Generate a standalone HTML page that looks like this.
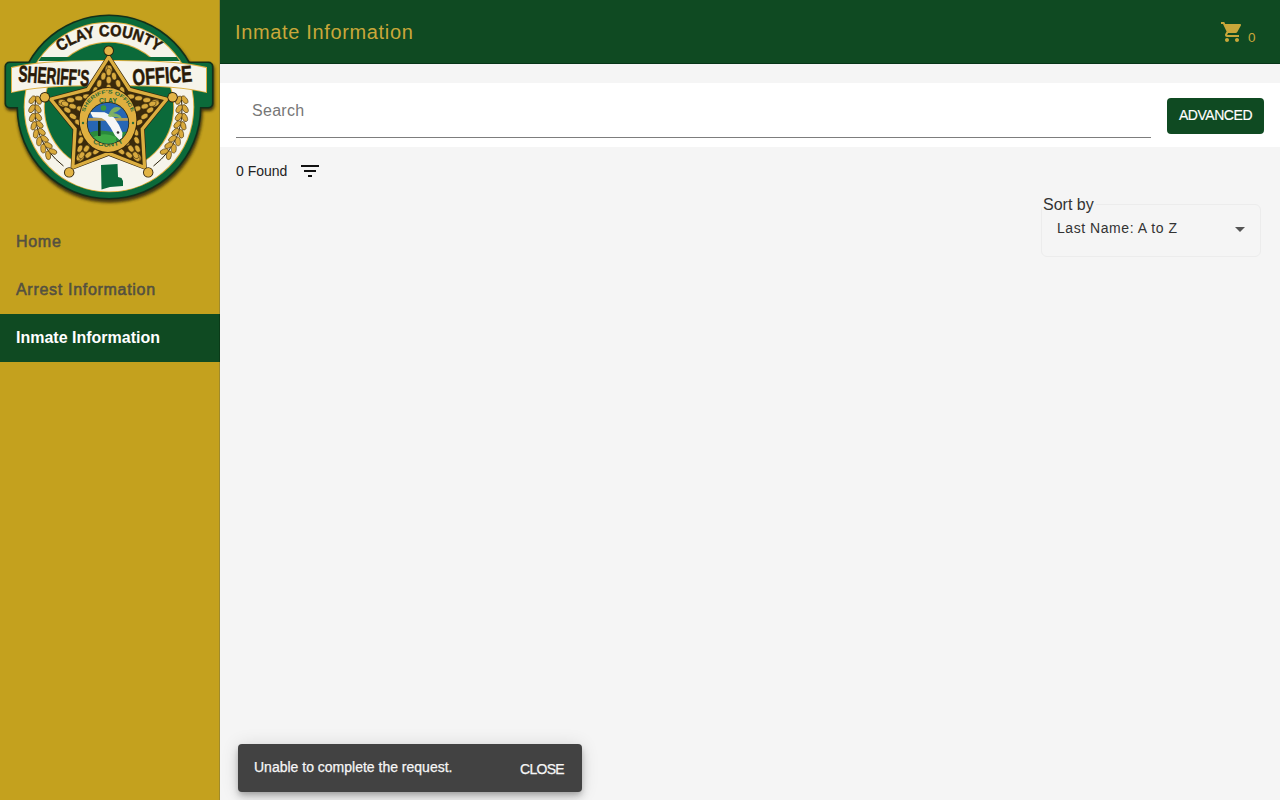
<!DOCTYPE html>
<html><head><meta charset="utf-8">
<style>
*{box-sizing:border-box;margin:0;padding:0}
html,body{width:1280px;height:800px;overflow:hidden;background:#f5f5f5;font-family:"Liberation Sans",sans-serif}
#side{position:absolute;left:0;top:0;width:220px;height:800px;background:#c4a11e;border-right:1px solid #a08a2a}
#logo{position:absolute;left:0;top:0;width:219px;height:210px}
.nav{position:absolute;left:0;width:219px;height:48px;font-size:16px;font-weight:400;letter-spacing:0.7px;-webkit-text-stroke:0.55px #545040;color:#545040;padding-left:16px;line-height:48px;white-space:nowrap}
.nav.sel{font-weight:700;letter-spacing:0;-webkit-text-stroke:0}
.nav.sel{background:#0f4a22;color:#fff;width:220px;border-right:1px solid #0a3a18}
#hdr{position:absolute;left:220px;top:0;width:1060px;height:64px;background:#0f4a22;border-bottom:1px solid #063518}
#title{position:absolute;left:15px;top:0;line-height:64px;font-size:20px;letter-spacing:0.65px;color:#c9a73a;white-space:nowrap}
#cart{position:absolute;left:1000px;top:20px;width:24px;height:24px}
#cnt{position:absolute;left:1028px;top:31px;font-size:13.5px;color:#c9a73a;line-height:14px}
#sbar{position:absolute;left:220px;top:83px;width:1060px;height:64px;background:#fff}
#sline{position:absolute;left:16px;top:54px;width:915px;height:1px;background:#7d7d7d}
#sph{position:absolute;left:32px;top:18px;font-size:16px;letter-spacing:0.3px;color:#777;line-height:20px}
#adv{position:absolute;left:947px;top:15px;width:97px;height:36px;background:#0f4a22;border-radius:4px;color:#fff;font-size:14px;letter-spacing:-0.45px;-webkit-text-stroke:0.15px #fff;text-align:center;line-height:35px}
#found{position:absolute;left:236px;top:162px;font-size:14px;color:#222;line-height:18px}
#filt{position:absolute;left:298px;top:159px;width:24px;height:24px}
#sortlbl{position:absolute;left:1042px;top:196px;font-size:16px;color:#333;line-height:18px;background:#f5f5f5;padding:0 2px 0 1px;z-index:2}
#sel{position:absolute;left:1041px;top:204px;width:220px;height:53px;border:1px solid #ececec;border-radius:6px}
#selv{position:absolute;left:1057px;top:220px;font-size:14px;letter-spacing:0.55px;color:#333;line-height:16px}
#arr{position:absolute;left:1235px;top:227px;width:0;height:0;border-left:5px solid transparent;border-right:5px solid transparent;border-top:5px solid #555}
#snack{position:absolute;left:238px;top:744px;width:344px;height:48px;background:#424242;border-radius:4px;box-shadow:0 3px 5px -1px rgba(0,0,0,.2),0 6px 10px 0 rgba(0,0,0,.14),0 1px 18px 0 rgba(0,0,0,.12)}
#smsg{position:absolute;left:16px;top:15px;font-size:14px;color:#f6f6f6;line-height:16px;white-space:nowrap;-webkit-text-stroke:0.25px #f6f6f6}
#sclose{position:absolute;left:282px;top:17px;font-size:14px;letter-spacing:-0.7px;color:#f6f6f6;line-height:16px;-webkit-text-stroke:0.25px #f6f6f6}
</style></head><body>
<div id="side">
<svg id="logo" viewBox="0 0 219 210" width="219" height="210">
<defs>
<filter id="sh" x="-10%" y="-10%" width="120%" height="130%"><feGaussianBlur stdDeviation="1.8"/></filter>
<clipPath id="inner"><circle cx="109.0" cy="107.0" r="84.3"/></clipPath>
</defs>
<g filter="url(#sh)" opacity="0.85"><circle cx="109.8" cy="109.8" r="93.0" fill="#2a2408"/><rect x="5.5" y="64" width="209" height="47" rx="5" fill="#2a2408"/></g>
<circle cx="109.0" cy="107.0" r="92.5" fill="#12301a"/>
<rect x="4.5" y="61.5" width="209" height="47" rx="5" fill="#12301a"/>
<circle cx="109.0" cy="107.0" r="90.9" fill="#0b6a3a"/>
<rect x="6.1" y="63.1" width="205.8" height="43.8" rx="4" fill="#0b6a3a"/>
<circle cx="109.0" cy="107.0" r="85.3" fill="#dcae40"/>
<circle cx="109.0" cy="107.0" r="84.3" fill="#f6f4ea"/>
<circle cx="109.0" cy="107.0" r="65.2" fill="#dcae40"/>
<circle cx="109.0" cy="107.0" r="64.2" fill="#0b6a3a"/>
<g clip-path="url(#inner)"><polygon points="108.7,154.5 201.3,190.7 201.3,220.0 16.1,220.0 16.1,190.7" fill="#f6f4ea"/></g>
<polygon points="101,165 117.5,164 118,177 121.5,178 123,181 123,186 110,187 101.5,189.5" fill="#0b6a3a"/>
<path id="arcT" d="M 26.5 118.5 A 82.5 82.5 0 0 1 191.5 118.5" fill="none"/>
<text font-family="Liberation Sans" font-weight="700" font-size="16" fill="#2a1a08" stroke="#2a1a08" stroke-width="0.5"><textPath href="#arcT" startOffset="50%" text-anchor="middle" textLength="104" lengthAdjust="spacingAndGlyphs">CLAY COUNTY</textPath></text>
<g clip-path="url(#inner)"><rect x="6" y="57" width="206" height="4" fill="#0b6a3a"/></g>
<path d="M 11.0 67.0 Q 40 59.5 109 60.0 Q 178 59.5 207.0 67.0 L 207.0 93.0 Q 178 85.5 109 86.0 Q 40 85.5 11.0 93.0 Z" fill="#dcae40"/>
<path d="M 12 68 Q 40 60.5 109 61 Q 178 60.5 206 68 L 206 92 Q 178 84.5 109 85 Q 40 84.5 12 92 Z" fill="#f6f4ea"/>
<text x="18.4" y="84" font-family="Liberation Sans" font-weight="700" font-size="23" fill="#2a1a08" stroke="#2a1a08" stroke-width="0.6" textLength="71" lengthAdjust="spacingAndGlyphs" transform="rotate(4 54 76)">SHERIFF'S</text>
<text x="132.5" y="83.5" font-family="Liberation Sans" font-weight="700" font-size="23" fill="#2a1a08" stroke="#2a1a08" stroke-width="0.6" textLength="59.5" lengthAdjust="spacingAndGlyphs" transform="rotate(-4 163 76)">OFFICE</text>
<path d="M 35.8 96.5 Q 30.0 140.0 63.5 166.0" fill="none" stroke="#2a2008" stroke-width="1"/>
<ellipse cx="38.4" cy="100.2" rx="4.4" ry="2.5" transform="rotate(65.6 38.4 100.2)" fill="#d9aa3c" stroke="#4a3510" stroke-width="0.6"/>
<ellipse cx="32.4" cy="99.7" rx="4.4" ry="2.5" transform="rotate(125.6 32.4 99.7)" fill="#d9aa3c" stroke="#4a3510" stroke-width="0.6"/>
<ellipse cx="37.9" cy="108.8" rx="4.4" ry="2.5" transform="rotate(60.1 37.9 108.8)" fill="#d9aa3c" stroke="#4a3510" stroke-width="0.6"/>
<ellipse cx="31.9" cy="108.7" rx="4.4" ry="2.5" transform="rotate(120.1 31.9 108.7)" fill="#d9aa3c" stroke="#4a3510" stroke-width="0.6"/>
<ellipse cx="38.3" cy="116.8" rx="4.4" ry="2.5" transform="rotate(54.1 38.3 116.8)" fill="#d9aa3c" stroke="#4a3510" stroke-width="0.6"/>
<ellipse cx="32.4" cy="117.5" rx="4.4" ry="2.5" transform="rotate(114.1 32.4 117.5)" fill="#d9aa3c" stroke="#4a3510" stroke-width="0.6"/>
<ellipse cx="39.6" cy="124.5" rx="4.4" ry="2.5" transform="rotate(47.7 39.6 124.5)" fill="#d9aa3c" stroke="#4a3510" stroke-width="0.6"/>
<ellipse cx="33.7" cy="125.8" rx="4.4" ry="2.5" transform="rotate(107.7 33.7 125.8)" fill="#d9aa3c" stroke="#4a3510" stroke-width="0.6"/>
<ellipse cx="41.6" cy="131.8" rx="4.4" ry="2.5" transform="rotate(40.9 41.6 131.8)" fill="#d9aa3c" stroke="#4a3510" stroke-width="0.6"/>
<ellipse cx="35.9" cy="133.8" rx="4.4" ry="2.5" transform="rotate(100.9 35.9 133.8)" fill="#d9aa3c" stroke="#4a3510" stroke-width="0.6"/>
<ellipse cx="44.5" cy="138.8" rx="4.4" ry="2.5" transform="rotate(34.0 44.5 138.8)" fill="#d9aa3c" stroke="#4a3510" stroke-width="0.6"/>
<ellipse cx="39.1" cy="141.4" rx="4.4" ry="2.5" transform="rotate(94.0 39.1 141.4)" fill="#d9aa3c" stroke="#4a3510" stroke-width="0.6"/>
<ellipse cx="48.2" cy="145.3" rx="4.4" ry="2.5" transform="rotate(27.1 48.2 145.3)" fill="#d9aa3c" stroke="#4a3510" stroke-width="0.6"/>
<ellipse cx="43.2" cy="148.6" rx="4.4" ry="2.5" transform="rotate(87.1 43.2 148.6)" fill="#d9aa3c" stroke="#4a3510" stroke-width="0.6"/>
<ellipse cx="52.7" cy="151.5" rx="4.4" ry="2.5" transform="rotate(20.5 52.7 151.5)" fill="#d9aa3c" stroke="#4a3510" stroke-width="0.6"/>
<ellipse cx="48.1" cy="155.3" rx="4.4" ry="2.5" transform="rotate(80.5 48.1 155.3)" fill="#d9aa3c" stroke="#4a3510" stroke-width="0.6"/>
<path d="M 181.2 96.5 Q 187.0 140.0 153.5 166.0" fill="none" stroke="#2a2008" stroke-width="1"/>
<ellipse cx="184.6" cy="99.7" rx="4.4" ry="2.5" transform="rotate(54.4 184.6 99.7)" fill="#d9aa3c" stroke="#4a3510" stroke-width="0.6"/>
<ellipse cx="178.6" cy="100.2" rx="4.4" ry="2.5" transform="rotate(114.4 178.6 100.2)" fill="#d9aa3c" stroke="#4a3510" stroke-width="0.6"/>
<ellipse cx="185.1" cy="108.7" rx="4.4" ry="2.5" transform="rotate(59.9 185.1 108.7)" fill="#d9aa3c" stroke="#4a3510" stroke-width="0.6"/>
<ellipse cx="179.1" cy="108.8" rx="4.4" ry="2.5" transform="rotate(119.9 179.1 108.8)" fill="#d9aa3c" stroke="#4a3510" stroke-width="0.6"/>
<ellipse cx="184.6" cy="117.5" rx="4.4" ry="2.5" transform="rotate(65.9 184.6 117.5)" fill="#d9aa3c" stroke="#4a3510" stroke-width="0.6"/>
<ellipse cx="178.7" cy="116.8" rx="4.4" ry="2.5" transform="rotate(125.9 178.7 116.8)" fill="#d9aa3c" stroke="#4a3510" stroke-width="0.6"/>
<ellipse cx="183.3" cy="125.8" rx="4.4" ry="2.5" transform="rotate(72.3 183.3 125.8)" fill="#d9aa3c" stroke="#4a3510" stroke-width="0.6"/>
<ellipse cx="177.4" cy="124.5" rx="4.4" ry="2.5" transform="rotate(132.3 177.4 124.5)" fill="#d9aa3c" stroke="#4a3510" stroke-width="0.6"/>
<ellipse cx="181.1" cy="133.8" rx="4.4" ry="2.5" transform="rotate(79.1 181.1 133.8)" fill="#d9aa3c" stroke="#4a3510" stroke-width="0.6"/>
<ellipse cx="175.4" cy="131.8" rx="4.4" ry="2.5" transform="rotate(139.1 175.4 131.8)" fill="#d9aa3c" stroke="#4a3510" stroke-width="0.6"/>
<ellipse cx="177.9" cy="141.4" rx="4.4" ry="2.5" transform="rotate(86.0 177.9 141.4)" fill="#d9aa3c" stroke="#4a3510" stroke-width="0.6"/>
<ellipse cx="172.5" cy="138.8" rx="4.4" ry="2.5" transform="rotate(146.0 172.5 138.8)" fill="#d9aa3c" stroke="#4a3510" stroke-width="0.6"/>
<ellipse cx="173.8" cy="148.6" rx="4.4" ry="2.5" transform="rotate(92.9 173.8 148.6)" fill="#d9aa3c" stroke="#4a3510" stroke-width="0.6"/>
<ellipse cx="168.8" cy="145.3" rx="4.4" ry="2.5" transform="rotate(152.9 168.8 145.3)" fill="#d9aa3c" stroke="#4a3510" stroke-width="0.6"/>
<ellipse cx="168.9" cy="155.3" rx="4.4" ry="2.5" transform="rotate(99.5 168.9 155.3)" fill="#d9aa3c" stroke="#4a3510" stroke-width="0.6"/>
<ellipse cx="164.3" cy="151.5" rx="4.4" ry="2.5" transform="rotate(159.5 164.3 151.5)" fill="#d9aa3c" stroke="#4a3510" stroke-width="0.6"/>
<polygon points="108.7,53.0 131.0,87.3 170.5,97.9 144.8,129.7 146.9,170.6 108.7,156.0 70.5,170.6 72.6,129.7 46.9,97.9 86.4,87.3" fill="#33240a"/>
<polygon points="108.7,54.0 130.6,87.9 169.6,98.2 144.1,129.5 146.3,169.8 108.7,155.2 71.1,169.8 73.3,129.5 47.8,98.2 86.8,87.9" fill="#dcae40"/>
<polygon points="108.7,60.0 128.4,90.9 163.9,100.1 140.6,128.4 142.8,164.9 108.7,151.5 74.6,164.9 76.8,128.4 53.5,100.1 89.0,90.9" fill="#3a2a0c"/>
<ellipse cx="107.7" cy="68.9" rx="3.9" ry="2.5" transform="rotate(102.5 107.7 68.9)" fill="#d8aa3e" stroke="#2e2008" stroke-width="0.5"/>
<ellipse cx="103.4" cy="76.2" rx="3.9" ry="2.5" transform="rotate(102.5 103.4 76.2)" fill="#d8aa3e" stroke="#2e2008" stroke-width="0.5"/>
<ellipse cx="99.2" cy="83.5" rx="3.9" ry="2.5" transform="rotate(102.5 99.2 83.5)" fill="#d8aa3e" stroke="#2e2008" stroke-width="0.5"/>
<ellipse cx="95.2" cy="90.5" rx="3.9" ry="2.5" transform="rotate(102.5 95.2 90.5)" fill="#d8aa3e" stroke="#2e2008" stroke-width="0.5"/>
<ellipse cx="109.7" cy="68.9" rx="3.9" ry="2.5" transform="rotate(77.5 109.7 68.9)" fill="#d8aa3e" stroke="#2e2008" stroke-width="0.5"/>
<ellipse cx="114.0" cy="76.2" rx="3.9" ry="2.5" transform="rotate(77.5 114.0 76.2)" fill="#d8aa3e" stroke="#2e2008" stroke-width="0.5"/>
<ellipse cx="118.2" cy="83.5" rx="3.9" ry="2.5" transform="rotate(77.5 118.2 83.5)" fill="#d8aa3e" stroke="#2e2008" stroke-width="0.5"/>
<ellipse cx="122.2" cy="90.5" rx="3.9" ry="2.5" transform="rotate(77.5 122.2 90.5)" fill="#d8aa3e" stroke="#2e2008" stroke-width="0.5"/>
<ellipse cx="108.7" cy="88.0" rx="3.8" ry="2.6" transform="rotate(-90.0 108.7 88.0)" fill="#d8aa3e" stroke="#2e2008" stroke-width="0.5"/>
<ellipse cx="108.7" cy="80.0" rx="3.8" ry="2.6" transform="rotate(-90.0 108.7 80.0)" fill="#d8aa3e" stroke="#2e2008" stroke-width="0.5"/>
<ellipse cx="108.7" cy="72.0" rx="3.8" ry="2.6" transform="rotate(-90.0 108.7 72.0)" fill="#d8aa3e" stroke="#2e2008" stroke-width="0.5"/>
<ellipse cx="155.1" cy="101.9" rx="3.9" ry="2.5" transform="rotate(-185.5 155.1 101.9)" fill="#d8aa3e" stroke="#2e2008" stroke-width="0.5"/>
<ellipse cx="146.8" cy="100.1" rx="3.9" ry="2.5" transform="rotate(-185.5 146.8 100.1)" fill="#d8aa3e" stroke="#2e2008" stroke-width="0.5"/>
<ellipse cx="138.6" cy="98.3" rx="3.9" ry="2.5" transform="rotate(-185.5 138.6 98.3)" fill="#d8aa3e" stroke="#2e2008" stroke-width="0.5"/>
<ellipse cx="130.7" cy="96.6" rx="3.9" ry="2.5" transform="rotate(-185.5 130.7 96.6)" fill="#d8aa3e" stroke="#2e2008" stroke-width="0.5"/>
<ellipse cx="155.7" cy="103.8" rx="3.9" ry="2.5" transform="rotate(149.5 155.7 103.8)" fill="#d8aa3e" stroke="#2e2008" stroke-width="0.5"/>
<ellipse cx="150.1" cy="110.1" rx="3.9" ry="2.5" transform="rotate(149.5 150.1 110.1)" fill="#d8aa3e" stroke="#2e2008" stroke-width="0.5"/>
<ellipse cx="144.5" cy="116.4" rx="3.9" ry="2.5" transform="rotate(149.5 144.5 116.4)" fill="#d8aa3e" stroke="#2e2008" stroke-width="0.5"/>
<ellipse cx="139.1" cy="122.4" rx="3.9" ry="2.5" transform="rotate(149.5 139.1 122.4)" fill="#d8aa3e" stroke="#2e2008" stroke-width="0.5"/>
<ellipse cx="137.2" cy="108.7" rx="3.8" ry="2.6" transform="rotate(-18.0 137.2 108.7)" fill="#d8aa3e" stroke="#2e2008" stroke-width="0.5"/>
<ellipse cx="144.8" cy="106.3" rx="3.8" ry="2.6" transform="rotate(-18.0 144.8 106.3)" fill="#d8aa3e" stroke="#2e2008" stroke-width="0.5"/>
<ellipse cx="152.4" cy="103.8" rx="3.8" ry="2.6" transform="rotate(-18.0 152.4 103.8)" fill="#d8aa3e" stroke="#2e2008" stroke-width="0.5"/>
<ellipse cx="138.4" cy="157.1" rx="3.9" ry="2.5" transform="rotate(-113.5 138.4 157.1)" fill="#d8aa3e" stroke="#2e2008" stroke-width="0.5"/>
<ellipse cx="137.5" cy="148.7" rx="3.9" ry="2.5" transform="rotate(-113.5 137.5 148.7)" fill="#d8aa3e" stroke="#2e2008" stroke-width="0.5"/>
<ellipse cx="136.7" cy="140.3" rx="3.9" ry="2.5" transform="rotate(-113.5 136.7 140.3)" fill="#d8aa3e" stroke="#2e2008" stroke-width="0.5"/>
<ellipse cx="135.8" cy="132.3" rx="3.9" ry="2.5" transform="rotate(-113.5 135.8 132.3)" fill="#d8aa3e" stroke="#2e2008" stroke-width="0.5"/>
<ellipse cx="136.7" cy="158.3" rx="3.9" ry="2.5" transform="rotate(-138.5 136.7 158.3)" fill="#d8aa3e" stroke="#2e2008" stroke-width="0.5"/>
<ellipse cx="129.0" cy="154.9" rx="3.9" ry="2.5" transform="rotate(-138.5 129.0 154.9)" fill="#d8aa3e" stroke="#2e2008" stroke-width="0.5"/>
<ellipse cx="121.3" cy="151.5" rx="3.9" ry="2.5" transform="rotate(-138.5 121.3 151.5)" fill="#d8aa3e" stroke="#2e2008" stroke-width="0.5"/>
<ellipse cx="113.9" cy="148.2" rx="3.9" ry="2.5" transform="rotate(-138.5 113.9 148.2)" fill="#d8aa3e" stroke="#2e2008" stroke-width="0.5"/>
<ellipse cx="126.3" cy="142.3" rx="3.8" ry="2.6" transform="rotate(54.0 126.3 142.3)" fill="#d8aa3e" stroke="#2e2008" stroke-width="0.5"/>
<ellipse cx="131.0" cy="148.7" rx="3.8" ry="2.6" transform="rotate(54.0 131.0 148.7)" fill="#d8aa3e" stroke="#2e2008" stroke-width="0.5"/>
<ellipse cx="135.7" cy="155.2" rx="3.8" ry="2.6" transform="rotate(54.0 135.7 155.2)" fill="#d8aa3e" stroke="#2e2008" stroke-width="0.5"/>
<ellipse cx="80.7" cy="158.3" rx="3.9" ry="2.5" transform="rotate(-41.5 80.7 158.3)" fill="#d8aa3e" stroke="#2e2008" stroke-width="0.5"/>
<ellipse cx="88.4" cy="154.9" rx="3.9" ry="2.5" transform="rotate(-41.5 88.4 154.9)" fill="#d8aa3e" stroke="#2e2008" stroke-width="0.5"/>
<ellipse cx="96.1" cy="151.5" rx="3.9" ry="2.5" transform="rotate(-41.5 96.1 151.5)" fill="#d8aa3e" stroke="#2e2008" stroke-width="0.5"/>
<ellipse cx="103.5" cy="148.2" rx="3.9" ry="2.5" transform="rotate(-41.5 103.5 148.2)" fill="#d8aa3e" stroke="#2e2008" stroke-width="0.5"/>
<ellipse cx="79.0" cy="157.1" rx="3.9" ry="2.5" transform="rotate(-66.5 79.0 157.1)" fill="#d8aa3e" stroke="#2e2008" stroke-width="0.5"/>
<ellipse cx="79.9" cy="148.7" rx="3.9" ry="2.5" transform="rotate(-66.5 79.9 148.7)" fill="#d8aa3e" stroke="#2e2008" stroke-width="0.5"/>
<ellipse cx="80.7" cy="140.3" rx="3.9" ry="2.5" transform="rotate(-66.5 80.7 140.3)" fill="#d8aa3e" stroke="#2e2008" stroke-width="0.5"/>
<ellipse cx="81.6" cy="132.3" rx="3.9" ry="2.5" transform="rotate(-66.5 81.6 132.3)" fill="#d8aa3e" stroke="#2e2008" stroke-width="0.5"/>
<ellipse cx="91.1" cy="142.3" rx="3.8" ry="2.6" transform="rotate(126.0 91.1 142.3)" fill="#d8aa3e" stroke="#2e2008" stroke-width="0.5"/>
<ellipse cx="86.4" cy="148.7" rx="3.8" ry="2.6" transform="rotate(126.0 86.4 148.7)" fill="#d8aa3e" stroke="#2e2008" stroke-width="0.5"/>
<ellipse cx="81.7" cy="155.2" rx="3.8" ry="2.6" transform="rotate(126.0 81.7 155.2)" fill="#d8aa3e" stroke="#2e2008" stroke-width="0.5"/>
<ellipse cx="61.7" cy="103.8" rx="3.9" ry="2.5" transform="rotate(30.5 61.7 103.8)" fill="#d8aa3e" stroke="#2e2008" stroke-width="0.5"/>
<ellipse cx="67.3" cy="110.1" rx="3.9" ry="2.5" transform="rotate(30.5 67.3 110.1)" fill="#d8aa3e" stroke="#2e2008" stroke-width="0.5"/>
<ellipse cx="72.9" cy="116.4" rx="3.9" ry="2.5" transform="rotate(30.5 72.9 116.4)" fill="#d8aa3e" stroke="#2e2008" stroke-width="0.5"/>
<ellipse cx="78.3" cy="122.4" rx="3.9" ry="2.5" transform="rotate(30.5 78.3 122.4)" fill="#d8aa3e" stroke="#2e2008" stroke-width="0.5"/>
<ellipse cx="62.3" cy="101.9" rx="3.9" ry="2.5" transform="rotate(5.5 62.3 101.9)" fill="#d8aa3e" stroke="#2e2008" stroke-width="0.5"/>
<ellipse cx="70.6" cy="100.1" rx="3.9" ry="2.5" transform="rotate(5.5 70.6 100.1)" fill="#d8aa3e" stroke="#2e2008" stroke-width="0.5"/>
<ellipse cx="78.8" cy="98.3" rx="3.9" ry="2.5" transform="rotate(5.5 78.8 98.3)" fill="#d8aa3e" stroke="#2e2008" stroke-width="0.5"/>
<ellipse cx="86.7" cy="96.6" rx="3.9" ry="2.5" transform="rotate(5.5 86.7 96.6)" fill="#d8aa3e" stroke="#2e2008" stroke-width="0.5"/>
<ellipse cx="80.2" cy="108.7" rx="3.8" ry="2.6" transform="rotate(198.0 80.2 108.7)" fill="#d8aa3e" stroke="#2e2008" stroke-width="0.5"/>
<ellipse cx="72.6" cy="106.3" rx="3.8" ry="2.6" transform="rotate(198.0 72.6 106.3)" fill="#d8aa3e" stroke="#2e2008" stroke-width="0.5"/>
<ellipse cx="65.0" cy="103.8" rx="3.8" ry="2.6" transform="rotate(198.0 65.0 103.8)" fill="#d8aa3e" stroke="#2e2008" stroke-width="0.5"/>
<circle cx="108.7" cy="50.8" r="5.2" fill="#33240a"/><circle cx="108.7" cy="50.8" r="4.3" fill="#e2b446"/>
<circle cx="172.6" cy="97.2" r="5.2" fill="#33240a"/><circle cx="172.6" cy="97.2" r="4.3" fill="#e2b446"/>
<circle cx="148.2" cy="172.4" r="5.2" fill="#33240a"/><circle cx="148.2" cy="172.4" r="4.3" fill="#e2b446"/>
<circle cx="69.2" cy="172.4" r="5.2" fill="#33240a"/><circle cx="69.2" cy="172.4" r="4.3" fill="#e2b446"/>
<circle cx="44.8" cy="97.2" r="5.2" fill="#33240a"/><circle cx="44.8" cy="97.2" r="4.3" fill="#e2b446"/>
<ellipse cx="108.0" cy="120.0" rx="29.3" ry="33" fill="#33240a"/>
<ellipse cx="108.0" cy="120.0" rx="28.4" ry="32" fill="#e0b040"/>
<path id="sealT" d="M 82.5 124.0 A 25.5 30.5 0 0 1 133.5 124.0" fill="none"/>
<text font-family="Liberation Sans" font-weight="700" font-size="5" fill="#2b6a38"><textPath href="#sealT" startOffset="50%" text-anchor="middle" textLength="64" lengthAdjust="spacingAndGlyphs">SHERIFF'S OFFICE</textPath></text>
<path id="sealB" d="M 90.0 140.0 A 20 12 0 0 0 126.0 140.0" fill="none"/>
<text font-family="Liberation Sans" font-weight="700" font-size="7" fill="#2b6a38"><textPath href="#sealB" startOffset="50%" text-anchor="middle" textLength="32" lengthAdjust="spacingAndGlyphs">COUNTY</textPath></text>
<text x="99.0" y="102.5" font-family="Liberation Sans" font-weight="700" font-size="6.5" fill="#2b6a38" textLength="18" lengthAdjust="spacingAndGlyphs">CLAY</text>
<circle cx="83" cy="123" r="1.2" fill="#2b6a38"/><circle cx="133" cy="123" r="1.2" fill="#2b6a38"/>
<circle cx="108.0" cy="123.2" r="21.2" fill="#2b2a14"/>
<circle cx="108.0" cy="123.2" r="20.4" fill="#2766b4"/>
<clipPath id="sealc"><circle cx="108.0" cy="123.2" r="20.4"/></clipPath>
<g clip-path="url(#sealc)">
<path d="M 86 134 Q 96 129 106 131 Q 116 133 130 131 L 130 146 L 86 146 Z" fill="#2a8a3c"/>
<path d="M 92 138 Q 104 131 116 137 L 116 146 L 92 146 Z" fill="#3faa45"/>
<rect x="86" y="118" width="44" height="2.8" fill="#b39a55"/>
<path d="M 90 112 L 104.5 112.3 L 109 114.5 L 114 117.5 L 119 125 L 122.5 133 L 122 138.5 L 119.5 140 L 115 135.5 L 110.5 127.5 L 105.5 120.5 L 101.5 118 L 93 117.5 Z" fill="#f6f6f6"/>
<circle cx="118" cy="132.5" r="1.3" fill="#303030"/>
<rect x="98" y="121" width="2.6" height="15" fill="#16301a"/>
<path d="M 108 116 Q 112 104 121 108 Q 118 112 113 113 Q 121 114 122 119 Q 115 116 110 117 Z" fill="#8ab85a" opacity="0.9"/>
<circle cx="103.5" cy="108" r="2.8" fill="#3a9a40"/>
</g>
</svg>
<div class="nav" style="top:218px">Home</div>
<div class="nav" style="top:266px">Arrest Information</div>
<div class="nav sel" style="top:314px">Inmate Information</div>
</div>
<div id="hdr">
<div id="title">Inmate Information</div>
<svg id="cart" viewBox="0 0 24 24"><path fill="#c9a73a" d="M7 18c-1.1 0-1.99.9-1.99 2S5.9 22 7 22s2-.9 2-2-.9-2-2-2zM1 2v2h2l3.6 7.59-1.35 2.45c-.16.28-.25.61-.25.96 0 1.1.9 2 2 2h12v-2H7.42c-.14 0-.25-.11-.25-.25l.03-.12.9-1.63h7.45c.75 0 1.410-.41 1.75-1.03l3.58-6.49c.08-.14.12-.31.12-.48 0-.55-.45-1-1-1H5.21l-.94-2H1zm16 16c-1.1 0-1.99.9-1.99 2s.89 2 1.99 2 2-.9 2-2-.9-2-2-2z"/></svg>
<div id="cnt">0</div>
</div>
<div id="sbar">
<div id="sph">Search</div>
<div id="sline"></div>
<div id="adv">ADVANCED</div>
</div>
<div id="found">0 Found</div>
<svg id="filt" viewBox="0 0 24 24"><path fill="#111" d="M10 18h4v-2h-4v2zM3 6v2h18V6H3zm3 7h12v-2H6v2z"/></svg>
<div id="sortlbl">Sort by</div>
<div id="sel"></div>
<div id="selv">Last Name: A to Z</div>
<div id="arr"></div>
<div id="snack">
<div id="smsg">Unable to complete the request.</div>
<div id="sclose">CLOSE</div>
</div>
</body></html>
